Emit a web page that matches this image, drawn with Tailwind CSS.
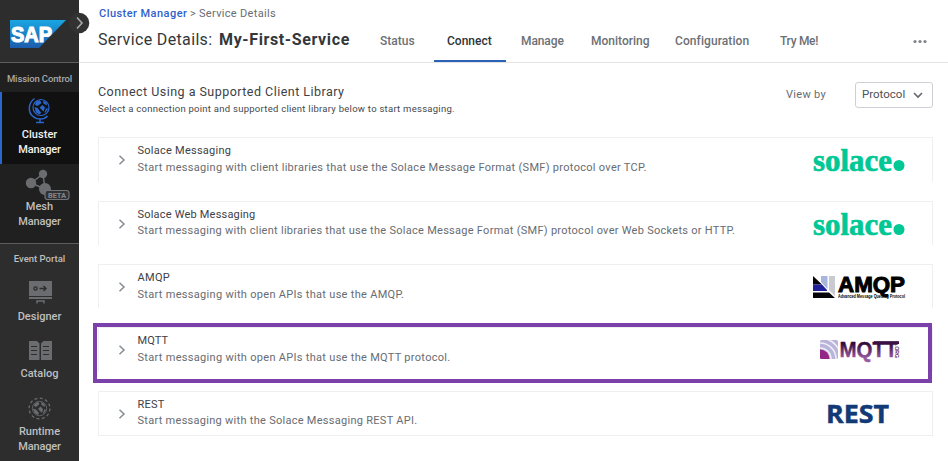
<!DOCTYPE html>
<html lang="en">
<head>
<meta charset="utf-8">
<title>Service Details</title>
<script src="https://cdn.jsdelivr.net/npm/@tailwindcss/browser@4"></script>
</head>
<body class="w-[948px] h-[461px] overflow-hidden bg-white font-[Roboto,sans-serif] text-[11px] text-[#686c72]">
<div class="relative flex h-[461px] w-[948px]">
  <!-- Sidebar -->
  <aside class="flex h-full w-[79px] shrink-0 flex-col bg-[#2d2d2d] text-center text-[#bfbfbf]">
    <div class="h-[62px] pt-5 pl-[10px]">
      <svg class="h-7 w-14 overflow-visible" viewBox="0 0 56 28">
        <defs><linearGradient id="sap" x1="0" y1="0" x2="0" y2="1"><stop offset="0" stop-color="#19a6e3"/><stop offset="1" stop-color="#1d5cac"/></linearGradient></defs>
        <path d="M0 0H56L29 28H0Z" fill="url(#sap)"/>
        <text x="1" y="21.800" font-family="Liberation Sans, sans-serif" font-weight="700" font-size="22.500" textLength="41" lengthAdjust="spacingAndGlyphs" fill="#fff" stroke="#fff" stroke-width="1.200">SAP</text>
      </svg>
    </div>
    <div class="h-[30px] border-t border-[#5d5d5d] bg-[#202020] text-[9.5px] leading-[31px] font-medium text-[#a9a9a9]"><span class="tracking-[-0.13px]">Mission Control</span></div>
    <div class="flex h-[72px] flex-col items-center border-l-2 border-[#2b66cc] bg-[#111] pt-[5px] pr-[2px] font-medium text-[#f1f1f1]">
      <svg class="h-7 w-6 shrink-0" viewBox="0 0 24 28" fill="none" stroke="#2b66cc" stroke-width="1.500">
        <circle cx="13" cy="10.500" r="8" stroke-width="1.200"/><path d="M6.500 1.500C0 6 0 15 4.500 19C9 23 16 23 19.500 19M12 22V25M8 25.500H16"/>
        <path d="M8 4.500L12 3.200L13.500 6L9.500 9L7 8ZM15 3.500L18.500 5.500L19 8.500L15.500 6.500ZM6.500 10L9.500 11L13 15.500L12 17.500L8 15.500ZM14.500 8L17 10.500L15.500 14.500L11.500 10.500ZM18.500 11L20 12L17 16L16.500 15Z" fill="#2b66cc" stroke="none"/>
      </svg>
      <div class="mt-[2px] leading-[15px]"><span class="tracking-[0.05px]">Cluster</span><br><span class="tracking-[-0.15px]">Manager</span></div>
    </div>
    <div class="flex h-[79px] flex-col items-center bg-[#202020] pt-[5px] font-medium">
      <div class="relative h-7 w-full">
        <svg class="absolute top-0 left-[25px] h-[31px] w-[46px]" viewBox="0 0 46 31">
          <path d="M18 5L6 14L20 20L18 5" fill="none" stroke="#6b6c70" stroke-width="1.500"/>
          <g fill="#6b6c70"><circle cx="18" cy="5" r="4.200"/><circle cx="6" cy="14" r="5.200"/><circle cx="20" cy="20" r="6"/></g>
          <rect x="20" y="21.500" width="24" height="9" rx="2.500" fill="#303135" stroke="#737478" stroke-width="1.200"/>
          <text x="23" y="28.800" font-family="Roboto, sans-serif" font-size="7.500" font-weight="700" textLength="18" fill="#85868a">BETA</text>
        </svg>
      </div>
      <div class="mt-[2px] leading-[15px]"><span class="tracking-[0.05px]">Mesh</span><br><span class="tracking-[-0.15px]">Manager</span></div>
    </div>
    <div class="h-[30px] border-t border-[#5d5d5d] text-[9.5px] leading-[30px] font-medium"><span>Event Portal</span></div>
    <div class="flex h-[58px] flex-col items-center pt-[8px] font-medium">
      <svg class="h-6 w-6 shrink-0" viewBox="0 0 24 24"><path d="M1 0H24V15H1ZM1 16H24V18H1Z" fill="#6b6c70"/><path d="M9 22.500V20H16V22.500" fill="none" stroke="#6b6c70" stroke-width="1.500"/><circle cx="7.500" cy="7.500" r="1.600" fill="none" stroke="#2d2d2d" stroke-width="1.300"/><path d="M11.500 7.500H18M15.500 5L18 7.500L15.500 10" fill="none" stroke="#2d2d2d" stroke-width="1.400"/></svg>
      <div class="mt-[4px] leading-[15px]"><span>Designer</span></div>
    </div>
    <div class="flex h-[58px] flex-col items-center pt-[10px] font-medium">
      <svg class="h-[19px] w-6 shrink-0" viewBox="0 0 24 19"><path d="M1 0H9L11.500 2.500V19H1ZM13 2.500L15.500 0H24V19H13Z" fill="#6b6c70"/><path d="M3 5.500H9M3 9.500H9M3 13.500H9M15 5.500H21M15 9.500H21M15 13.500H21" stroke="#2d2d2d" stroke-width="1.200"/></svg>
      <div class="mt-[6px] leading-[15px]"><span>Catalog</span></div>
    </div>
    <div class="flex flex-col items-center pt-[8px] font-medium">
      <svg class="h-[23px] w-[23px] shrink-0" viewBox="0 0 23 23" fill="none" stroke="#6b6c70"><circle cx="11.500" cy="11.500" r="10.400" stroke-width="1.300" stroke-dasharray="3 2.440"/><circle cx="11.500" cy="11.500" r="7.200" stroke-width=".8"/><path d="M6.500 7L10 4.800L11.500 7L8 10L6 9ZM13 5L16.500 7L17 10L13.500 8ZM5 11.500L8 12.500L11 16L10 18L6.500 16ZM12.500 9.500L15 12L14 16L10 12ZM16.500 12L18 13L15.500 17L15 16Z" fill="#6b6c70" stroke="none"/></svg>
      <div class="mt-[4px] leading-[15px]"><span>Runtime</span><br><span class="tracking-[-0.15px]">Manager</span></div>
    </div>
  </aside>
  <svg class="absolute top-[12px] left-[68px] h-[22px] w-[22px]" viewBox="0 0 22 22"><circle cx="11" cy="11" r="10.300" fill="#323232"/><path d="M9 5.500L14 11L9 16.500" fill="none" stroke="#aaa" stroke-width="1.600"/></svg>

  <main class="flex min-w-0 flex-1 flex-col">
    <header class="h-[63px] border-b border-[#e2e3e4] pl-[19px]">
      <div class="flex h-[28px] items-center pl-px text-[11px] leading-[28px] whitespace-nowrap">
        <b class="w-[91px] font-medium tracking-[0.45px] text-[#2f5fcb]">Cluster Manager</b><span class="w-[9px]">&gt;</span><span class="tracking-[0.32px]">Service Details</span>
      </div>
      <div class="flex h-[34px] whitespace-nowrap">
        <h1 class="flex w-[282px] leading-[23px] text-[#33373b]"><span class="w-[121px] text-[16px] tracking-[0.35px]">Service Details:</span><b class="text-[16px] font-bold tracking-[0.62px]">My-First-Service</b></h1>
        <nav class="flex text-[12px] leading-[26px] font-medium text-[#6b7075]">
          <span class="w-[54px]">Status</span>
          <span class="h-[34px] w-[72px] border-b-2 border-[#2b62b8] pl-[13px] text-[#2f3439]">Connect</span>
          <span class="w-[70px] pl-[15px] tracking-[-0.1px]">Manage</span>
          <span class="w-[84px] pl-[15px]">Monitoring</span>
          <span class="w-[104px] pl-[15px] tracking-[0.08px]">Configuration</span>
          <span class="w-[149px] pl-[16px] tracking-[-0.3px]">Try Me!</span>
        </nav>
        <svg class="mt-[11px] h-[5px] w-[14px]" viewBox="0 0 14 5" fill="#80858a"><circle cx="2" cy="2.500" r="1.600"/><circle cx="7" cy="2.500" r="1.600"/><circle cx="12" cy="2.500" r="1.600"/></svg>
      </div>
    </header>
    <section class="pl-[19px]">
      <div class="flex h-[74px] whitespace-nowrap">
        <div class="w-[688px] pt-[20px]">
          <h2 class="text-[12.500px] leading-[18px] text-[#3d4146]"><span class="tracking-[0.47px]">Connect Using a Supported Client Library</span></h2>
          <p class="text-[9.5px] leading-[16px] text-[#44484c]"><span class="tracking-[0.26px]">Select a connection point and supported client library below to start messaging.</span></p>
        </div>
        <div class="w-[69px] pt-[23px] leading-[18px]"><span class="tracking-[0.3px]">View by</span></div>
        <div class="mt-[19px] flex h-[26px] w-[78px] items-center rounded-[3px] border border-[#cdd0d4] pl-[6px] text-[11.500px] text-[#4c5055]"><span class="w-[51px]">Protocol</span><svg class="h-[7px] w-[10px]" viewBox="0 0 10 7" fill="none" stroke="#63676b" stroke-width="1.600"><path d="M1 1L5 5L9 1"/></svg></div>
      </div>
      <div class="flex w-[835px] flex-col whitespace-nowrap">
        <article class="mb-[19px] flex h-[45px] border-x border-t border-[#efeff1]">
          <svg class="mt-[17px] ml-[19px] h-[10px] w-[19px]" viewBox="0 0 19 10" fill="none" stroke="#858b92" stroke-width="1.500"><path d="M1.500 .8L6 5L1.500 9.200"/></svg>
          <div class="w-[676px] pt-[4px] pl-[0.5px]"><h3 class="leading-[17px] text-[#3d4146]"><span class="tracking-[0.25px]">Solace Messaging</span></h3><p class="leading-[17px]"><span class="tracking-[0.3px]">Start messaging with client libraries that use the Solace Message Format (SMF) protocol over TCP.</span></p></div>
          <svg class="mt-[5px] h-[35px] w-[94px] overflow-visible" viewBox="0 -5 94 35" fill="#00c895"><text x="0" y="22.700" font-family="Liberation Serif, serif" font-weight="700" font-size="32.500" textLength="79" lengthAdjust="spacingAndGlyphs" stroke="#00c895" stroke-width=".7">solace</text><circle cx="86" cy="17.500" r="5.500"/></svg>
        </article>
        <article class="mb-[19px] flex h-[44px] border-x border-t border-[#efeff1]">
          <svg class="mt-[17px] ml-[19px] h-[10px] w-[19px]" viewBox="0 0 19 10" fill="none" stroke="#858b92" stroke-width="1.500"><path d="M1.500 .8L6 5L1.500 9.200"/></svg>
          <div class="w-[676px] pt-[4px] pl-[0.5px]"><h3 class="leading-[17px] text-[#3d4146]"><span class="tracking-[0.2px]">Solace Web Messaging</span></h3><p class="leading-[16px]"><span class="tracking-[0.275px]">Start messaging with client libraries that use the Solace Message Format (SMF) protocol over Web Sockets or HTTP.</span></p></div>
          <svg class="mt-[5px] h-[35px] w-[94px] overflow-visible" viewBox="0 -5 94 35" fill="#00c895"><text x="0" y="22.700" font-family="Liberation Serif, serif" font-weight="700" font-size="32.500" textLength="79" lengthAdjust="spacingAndGlyphs" stroke="#00c895" stroke-width=".7">solace</text><circle cx="86" cy="17.500" r="5.500"/></svg>
        </article>
        <article class="mb-[19px] flex h-[44px] border-x border-t border-[#efeff1]">
          <svg class="mt-[17px] ml-[19px] h-[10px] w-[19px]" viewBox="0 0 19 10" fill="none" stroke="#858b92" stroke-width="1.500"><path d="M1.500 .8L6 5L1.500 9.200"/></svg>
          <div class="w-[676px] pt-[4px] pl-[0.5px]"><h3 class="leading-[17px] text-[#3d4146]"><span class="tracking-[0.3px]">AMQP</span></h3><p class="leading-[17px]"><span class="tracking-[0.3px]">Start messaging with open APIs that use the AMQP.</span></p></div>
          <svg class="mt-[11px] h-[24px] w-[94px] overflow-visible" viewBox="0 0 94 24"><path d="M0 0L9 8.500H0ZM0 16.500H16L22 22H0Z" fill="#050507"/><path d="M0 8.500H9L14 14V15H0Z" fill="#20209b"/><path d="M8 0H14.500V13L8 6Z" fill="#a9b5df"/><path d="M16 0H22V20L16 14Z" fill="#c9cbd0"/><text x="25" y="16" font-family="Liberation Sans, sans-serif" font-weight="700" font-size="21.500" textLength="67" lengthAdjust="spacingAndGlyphs" stroke="#000" stroke-width="1">AMQP</text><text x="25" y="21.800" font-family="Liberation Sans, sans-serif" font-weight="700" font-size="4.500" textLength="67" lengthAdjust="spacingAndGlyphs">Advanced Message Queuing Protocol</text></svg>
        </article>
        <article class="mb-[19px] flex h-[45px] border-x border-t border-[#efeff1]">
          <svg class="mt-[17px] ml-[19px] h-[10px] w-[19px]" viewBox="0 0 19 10" fill="none" stroke="#858b92" stroke-width="1.500"><path d="M1.500 .8L6 5L1.500 9.200"/></svg>
          <div class="w-[683px] pt-[4px] pl-[0.5px]"><h3 class="leading-[17px] text-[#3d4146]"><span class="tracking-[0.1px]">MQTT</span></h3><p class="leading-[17px]"><span class="tracking-[0.3px]">Start messaging with open APIs that use the MQTT protocol.</span></p></div>
          <svg class="mt-[12px] h-[21px] w-[81px] overflow-visible" viewBox="0 0 81 21">
            <defs><linearGradient id="mq" gradientUnits="userSpaceOnUse" x1="0" y1="1" x2="0" y2="18"><stop offset=".15" stop-color="#320a3d"/><stop offset="1" stop-color="#9a5aa0"/></linearGradient><clipPath id="mc"><rect width="18" height="19" rx="1.500"/></clipPath></defs>
            <g clip-path="url(#mc)"><rect width="18" height="19" fill="#b9b5da"/><g fill="none" stroke="#eeedf7" stroke-width="1.600"><circle cx="0" cy="19" r="11"/><circle cx="0" cy="19" r="16"/><circle cx="0" cy="19" r="21"/></g><circle cx="0" cy="19" r="9.500" fill="#942584"/></g>
            <text x="19.500" y="16.500" font-family="Liberation Sans, sans-serif" font-weight="700" font-size="22" textLength="58" lengthAdjust="spacingAndGlyphs" fill="url(#mq)" stroke="url(#mq)" stroke-width=".4">MQTT</text><rect x="54" y="1.200" width="25" height="2.800" fill="#3a1045"/>
            <text transform="translate(75 5) rotate(90)" font-family="Liberation Sans, sans-serif" font-weight="700" font-size="5.500" textLength="13" fill="#5d2868">.ORG</text>
          </svg>
        </article>
        <article class="flex h-[45px] border border-[#efeff1]">
          <svg class="mt-[17px] ml-[19px] h-[10px] w-[19px]" viewBox="0 0 19 10" fill="none" stroke="#858b92" stroke-width="1.500"><path d="M1.500 .8L6 5L1.500 9.200"/></svg>
          <div class="w-[690px] pt-[4px] pl-[0.5px]"><h3 class="leading-[17px] text-[#3d4146]"><span class="tracking-[0.2px]">REST</span></h3><p class="leading-[16px]"><span class="tracking-[0.28px]">Start messaging with the Solace Messaging REST API.</span></p></div>
          <svg class="mt-[4px] h-[36px] w-[64px] overflow-visible" viewBox="0 -6 64 36"><text x="-1" y="20.500" font-family="Open Sans, sans-serif" font-weight="700" font-size="25" textLength="63" lengthAdjust="spacingAndGlyphs" fill="#113a77" stroke="#113a77" stroke-width=".5">REST</text></svg>
        </article>
      </div>
    </section>
  </main>
  <div class="absolute top-[323px] left-[93px] h-[60px] w-[839px] border-4 border-[#7b40a9]"></div>
</div>
</body>
</html>
